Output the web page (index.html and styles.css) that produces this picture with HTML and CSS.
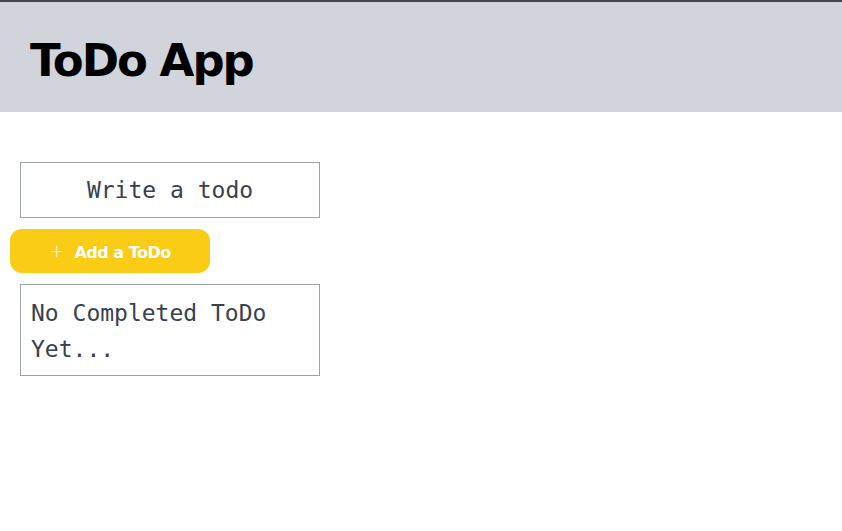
FILE: index.html
```html
<!DOCTYPE html>
<html lang="en">
<head>
<meta charset="utf-8">
<title>ToDo App</title>
<link rel="stylesheet" href="styles.css">
</head>
<body>
<header class="app-header">
  <h1 class="app-title">ToDo App</h1>
</header>
<main class="app-main">
  <input class="todo-input" type="text" placeholder="Write a todo">
  <button class="add-btn" type="button"><span class="plus">+</span><span class="add-label">Add a ToDo</span></button>
  <div class="todo-list">No Completed ToDo Yet...</div>
</main>
</body>
</html>
```
FILE: styles.css
```css
* { box-sizing: border-box; }
html, body { margin: 0; padding: 0; background: #ffffff; }
body {
  border-top: 2px solid #45454a;
  font-family: "DejaVu Sans", sans-serif;
}
.app-header {
  height: 110px;
  background: #d1d5db;
  display: flex;
  align-items: center;
  padding-left: 30px;
}
.app-title {
  margin: 0;
  font-family: "DejaVu Sans", sans-serif;
  font-weight: 700;
  font-size: 45px;
  color: #000;
  letter-spacing: -2px;
  position: relative;
  top: 3px;
}
.app-main {
  padding: 50px 10px 0 10px;
  display: flex;
  flex-direction: column;
  align-items: flex-start;
}
.todo-input {
  margin-left: 10px;
  width: 300px;
  height: 56px;
  border: 1px solid #9ca3af;
  text-align: center;
  font-family: "DejaVu Sans Mono", monospace;
  font-size: 23px;
  color: #374151;
  outline: none;
  padding: 0 10px;
}
.todo-input::placeholder { color: #374151; opacity: 1; }
.add-btn {
  margin-top: 11px;
  width: 200px;
  height: 44px;
  border: none;
  border-radius: 12px;
  background: #facc15;
  color: #fff;
  display: flex;
  align-items: center;
  justify-content: center;
  gap: 10px;
  padding: 0;
  cursor: pointer;
}
.plus {
  font-family: "DejaVu Sans", sans-serif;
  font-weight: 300;
  font-size: 18px;
  line-height: 1;
}
.add-label {
  font-family: "DejaVu Sans", sans-serif;
  font-weight: 700;
  font-size: 16px;
  letter-spacing: -0.5px;
  position: relative;
  top: 1px;
}
.todo-list {
  margin-top: 11px;
  margin-left: 10px;
  width: 300px;
  border: 1px solid #9ca3af;
  padding: 10px 10px 8px 10px;
  font-family: "DejaVu Sans Mono", monospace;
  font-size: 23px;
  line-height: 36px;
  color: #374151;
}
```
